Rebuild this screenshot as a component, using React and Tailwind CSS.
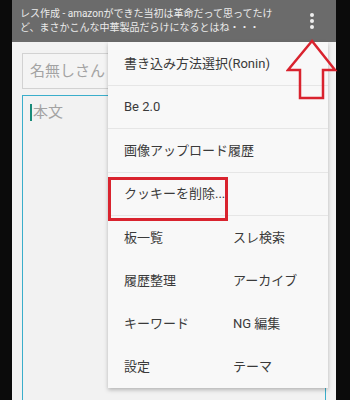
import React from 'react';

const font = { fontFamily: 'Roboto, "Noto Sans CJK JP", sans-serif' };

const listItems = ['書き込み方法選択(Ronin)', 'Be 2.0', '画像アップロード履歴', 'クッキーを削除...'];
const gridItems = [
  ['板一覧', 'スレ検索'],
  ['履歴整理', 'アーカイブ'],
  ['キーワード', 'NG 編集'],
  ['設定', 'テーマ'],
];

const Kebab = () => (
  <svg width="6" height="18" viewBox="0 0 6 18" className="fill-[#eeeeee]">
    <circle cx="3" cy="3" r="2" />
    <circle cx="3" cy="9" r="2" />
    <circle cx="3" cy="15" r="2" />
  </svg>
);

const Arrow = () => (
  <svg width="52" height="62" viewBox="0 0 52 62" className="absolute left-[286px] top-[39px]">
    <polygon
      points="26,2 2,31 14,31 14,59 37,59 37,31 49,31"
      fill="none"
      stroke="#d9232e"
      strokeWidth="2.5"
      strokeLinejoin="miter"
    />
  </svg>
);

export default function App() {
  return (
    <div className="relative w-[350px] h-[400px] overflow-hidden bg-[#0b0b0b] flex" style={font}>
      <div className="ml-[12px] w-[324px] h-full flex flex-col bg-[#f2f2f2]">
        {/* Title bar */}
        <div className="h-[42px] shrink-0 bg-[#6b6b6b] flex items-center pl-[8px] pr-[21px]">
          <p className="flex-1 text-[10px] leading-[14px] text-[#ececec]">
            レス作成 - amazonができた当初は革命だって思ってたけ<br />
            ど、まさかこんな中華製品だらけになるとはね・・・
          </p>
          <Kebab />
        </div>

        {/* Form */}
        <div className="flex-1 flex flex-col pl-[10px] pr-[10px] pt-[11px] gap-[6px]">
          <div className="h-[36px] border border-[#d2d2d2] bg-[#f4f4f4] flex items-center px-[7px]">
            <span className="text-[15px] text-[#a3a3a3]">名無しさん</span>
          </div>
          <div className="flex-1 border-[1.5px] border-[#3aaecb] border-b-0 px-[7px] pt-[8px]">
            <div className="flex items-center">
              <span className="w-[2px] h-[17px] bg-[#1b8c7a] mr-[1px]" />
              <span className="text-[15px] text-[#a3a3a3] leading-[17px]">本文</span>
            </div>
          </div>
        </div>
      </div>

      {/* Overflow menu */}
      <div className="absolute left-[108px] top-[42px] w-[220px] h-[346px] bg-[#f8f8f8] shadow-[0_2px_4px_rgba(0,0,0,0.25)] flex flex-col text-[13px] text-[#3a3a3a]">
        {listItems.map((t) => (
          <div key={t} className="h-[43.5px] shrink-0 flex items-center pl-[16px] border-b border-[#e6e6e6]">
            {t}
          </div>
        ))}
        <div className="grid grid-cols-[109px_1fr] pl-[16px]">
          {gridItems.map(([a, b]) => (
            <React.Fragment key={a}>
              <div className="h-[43px] flex items-center">{a}</div>
              <div className="h-[43px] flex items-center">{b}</div>
            </React.Fragment>
          ))}
        </div>
      </div>

      {/* Highlight box */}
      <div className="absolute left-[108px] top-[177px] w-[120px] h-[44px] border-[3px] border-[#d9232e]" />
      <Arrow />
    </div>
  );
}
